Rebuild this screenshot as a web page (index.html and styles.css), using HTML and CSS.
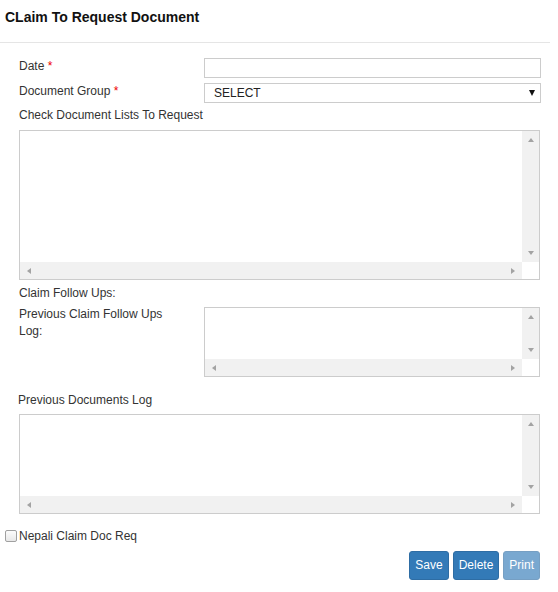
FILE: index.html
```html
<!DOCTYPE html>
<html>
<head>
<meta charset="utf-8">
<link rel="stylesheet" href="styles.css">
</head>
<body>
<div class="modal">
  <div class="header"><h4 class="title">CLaim To Request Document</h4></div>
  <div class="form">
    <div class="row first">
      <div class="label">Date <span class="req">*</span></div>
      <div class="control"><div class="input"></div></div>
    </div>
    <div class="row">
      <div class="label">Document Group <span class="req">*</span></div>
      <div class="control"><div class="input select">SELECT<span class="caret"></span></div></div>
    </div>
    <div class="label block check-label">Check Document Lists To Request</div>
    <div class="scrollbox box-lg">
      <div class="sb-content"></div>
      <div class="vbar"><span class="arr up"></span><span class="arr down"></span></div>
      <div class="hbar"><span class="arr left"></span><span class="arr right"></span></div>
      <div class="corner"></div>
    </div>
    <div class="label block follow-label">Claim Follow Ups:</div>
    <div class="row follow-row">
      <div class="label two-line">Previous Claim Follow Ups<br>Log:</div>
      <div class="control">
        <div class="scrollbox box-sm">
          <div class="sb-content"></div>
          <div class="vbar"><span class="arr up"></span><span class="arr down"></span></div>
          <div class="hbar"><span class="arr left"></span><span class="arr right"></span></div>
          <div class="corner"></div>
        </div>
      </div>
    </div>
    <div class="label block docs-label">Previous Documents Log</div>
    <div class="scrollbox box-md">
      <div class="sb-content"></div>
      <div class="vbar"><span class="arr up"></span><span class="arr down"></span></div>
      <div class="hbar"><span class="arr left"></span><span class="arr right"></span></div>
      <div class="corner"></div>
    </div>
    <label class="check-row"><span class="checkbox"></span><span class="check-text">Nepali Claim Doc Req</span></label>
    <div class="buttons">
      <button class="btn">Save</button>
      <button class="btn">Delete</button>
      <button class="btn disabled">Print</button>
    </div>
  </div>
</div>
</body>
</html>
```
FILE: styles.css
```css
* { box-sizing: border-box; }
html, body { margin: 0; padding: 0; background: #fff; }
body { font-family: "Liberation Sans", Arial, sans-serif; font-size: 12px; color: #333; }
.modal { width: 558px; }
.header { width: 550px; height: 43px; border-bottom: 1px solid #e5e5e5; padding: 9px 5px 0; }
.title { margin: 0; font-size: 14px; line-height: 16px; font-weight: bold; color: #111; }
.form { padding: 0 17px 0 19px; }
.row { display: flex; align-items: flex-start; margin-top: 5px; }
.row.first { margin-top: 15px; }
.label { width: 185px; flex: none; line-height: 16px; }
.label.block { width: auto; }
.req { color: #e00; }
.control { flex: 1; }
.input { height: 20px; border: 1px solid #ccc; background: #fff; }
.select { position: relative; padding-left: 9px; line-height: 18px; color: #222; }
.caret { position: absolute; right: 5px; top: 6px; width: 0; height: 0; border-left: 3.5px solid transparent; border-right: 3.5px solid transparent; border-top: 6px solid #111; }
.check-label { margin-top: 4px; }
.scrollbox { display: grid; grid-template-columns: 1fr 17px; grid-template-rows: 1fr 17px; border: 1px solid #ccc; width: 521px; background: #fff; }
.box-lg { height: 150px; margin-top: 7px; }
.box-sm { height: 70px; width: 336px; }
.box-md { height: 100px; margin-top: 6px; }
.sb-content { background: #fff; }
.vbar { background: #f1f1f1; display: flex; flex-direction: column; justify-content: space-between; align-items: center; padding: 7px 0; }
.hbar { background: #f1f1f1; display: flex; justify-content: space-between; align-items: center; padding: 0 7px 0 7px; }
.corner { background: #fff; }
.arr { width: 0; height: 0; display: block; }
.arr.up { border-left: 3.5px solid transparent; border-right: 3.5px solid transparent; border-bottom: 4px solid #a3a3a3; }
.arr.down { border-left: 3.5px solid transparent; border-right: 3.5px solid transparent; border-top: 4px solid #a3a3a3; }
.arr.left { border-top: 3.5px solid transparent; border-bottom: 3.5px solid transparent; border-right: 4px solid #a3a3a3; }
.arr.right { border-top: 3.5px solid transparent; border-bottom: 3.5px solid transparent; border-left: 4px solid #a3a3a3; }
.follow-label { margin-top: 5px; }
.follow-row { margin-top: 6px; }
.two-line { line-height: 17px; margin-top: -1px; }
.docs-label { margin-top: 15px; margin-left: -1px; }
.check-row { display: flex; align-items: center; margin-top: 14px; margin-left: -14px; line-height: 16px; }
.checkbox { width: 12px; height: 12px; border: 1px solid #a0a0a0; border-radius: 2px; background: linear-gradient(#fcfcfc, #e8e8e8); margin-right: 2px; }
.check-text { color: #333; }
.buttons { display: flex; justify-content: flex-end; gap: 4px; margin-top: 7px; padding-right: 1px; }
.btn { font-family: "Liberation Sans", Arial, sans-serif; font-size: 12px; line-height: 17px; height: 29px; padding: 5px 5px; color: #fff; background: #337ab7; border: 1px solid #2e6da4; border-radius: 3px; }
.btn.disabled { opacity: .65; }
```
